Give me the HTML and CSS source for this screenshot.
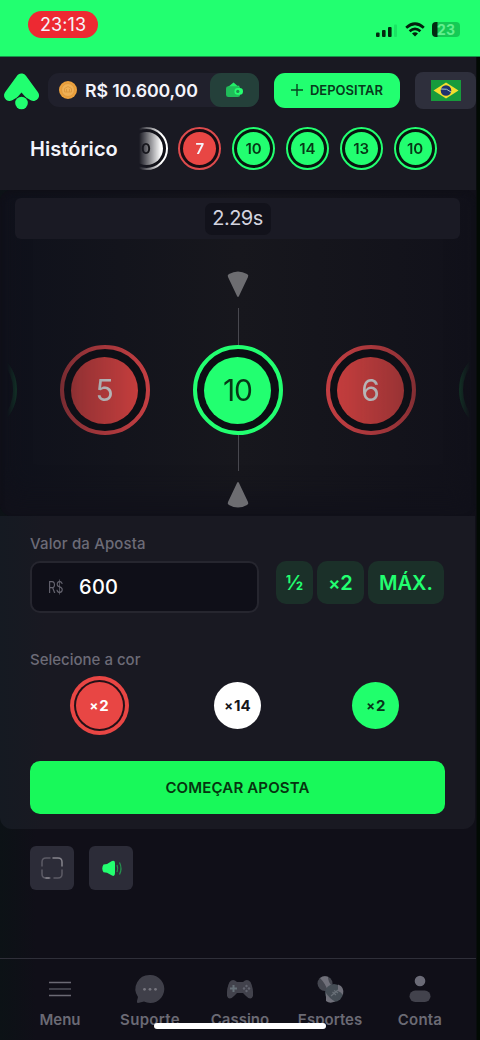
FILE: index.html
```html
<!DOCTYPE html>
<html lang="pt-BR">
<head>
<meta charset="utf-8">
<meta name="viewport" content="width=device-width, initial-scale=1">
<title>Double</title>
<link rel="stylesheet" href="styles.css">
</head>
<body>
<div class="app">
  <div class="status">
    <span class="clock">23:13</span>
    <div class="indicators">
      <svg width="22" height="14" viewBox="0 0 22 14"><g fill="#03280f"><rect x="0" y="9.500" width="3.600" height="4.500" rx="1"/><rect x="6" y="7" width="3.600" height="7" rx="1"/><rect x="12" y="4" width="3.600" height="10" rx="1"/></g><rect x="18" y="1.500" width="3" height="12.500" rx="1" fill="#1be464"/></svg>
      <svg width="20" height="15" viewBox="0 0 20 15"><g fill="none" stroke="#03200d" stroke-width="2.700"><path d="M1.200 5.700Q10-2.200 18.800 5.700"/><path d="M4.600 9.200Q10 4.400 15.400 9.200"/></g><path d="M7 11.500Q10 9 13 11.500L10 14.500Z" fill="#03200d"/></svg>
      <div class="battery">23</div>
    </div>
  </div>

  <header class="header">
    <svg class="logo" width="36" height="37" viewBox="0 0 36 37"><path d="M17.500 6L5.500 22.500L17.500 15.500L29.500 22.500Z" fill="#21ff70" stroke="#21ff70" stroke-width="11" stroke-linejoin="round"/><path d="M17.500 19.500L10 28V34H25V28Z" fill="#191923"/><circle cx="17.500" cy="30" r="6.300" fill="#21ff70"/></svg>
    <div class="balance">
      <svg class="coin" width="18" height="18" viewBox="0 0 18 18"><circle cx="9" cy="9" r="9" fill="#eda13d"/><circle cx="9" cy="9" r="6.500" fill="#f0b055" stroke="#e19a3c"/><path d="M5.500 7.500L9 5.500L12.500 7.500V11H5.500ZM7.500 8V11M10.500 8V11" fill="none" stroke="#df9a40"/></svg>
      <span class="amount">R$ 10.600,00</span>
      <div class="wallet"><svg width="17" height="16" viewBox="0 0 18 17"><path d="M1 6L8 0.500L12 4H14V7H1Z" fill="#23ee68"/><rect y="4.500" width="15" height="11.500" rx="2.500" fill="#20bd5a"/><rect x="9" y="6.500" width="9" height="7" rx="3.500" fill="#25ff70"/><circle cx="12.500" cy="10" r="1.700" fill="#248c50"/></svg></div>
    </div>
    <button class="deposit"><svg width="12" height="12" viewBox="0 0 12 12"><path d="M6 0V12M0 6H12" stroke="#07451f" stroke-width="1.400"/></svg><span>DEPOSITAR</span></button>
    <div class="lang"><svg width="30" height="21" viewBox="0 0 30 21"><rect width="30" height="21" fill="#179b3c"/><path d="M15 2.500L27.500 10.500L15 18.500L2.500 10.500Z" fill="#f3de2f"/><circle cx="15" cy="10.500" r="5.300" fill="#20336f"/><path d="M10 9Q16 8 20 12" fill="none" stroke="#a9c7c6"/></svg></div>
  </header>

  <section class="history">
    <h2 class="history-title">Histórico</h2>
    <div class="history-list">
      <div class="chip white"><span>0</span></div>
      <div class="chip red"><span>7</span></div>
      <div class="chip green"><span>10</span></div>
      <div class="chip green"><span>14</span></div>
      <div class="chip green"><span>13</span></div>
      <div class="chip green"><span>10</span></div>
    </div>
  </section>

  <section class="game">
    <div class="timer"><span>2.29s</span></div>
    <div class="stage">
      <div class="pointer">
        <svg width="22" height="27" viewBox="0 0 22 27"><path d="M1 6Q0 4 2 3Q11-2 20 3Q22 4 21 6L12 25Q11 27 10 25Z" fill="#6d6d71"/></svg>
        <i class="line"></i>
      </div>
      <div class="reel">
        <div class="ball green faded"></div>
        <div class="ball red"><span>5</span></div>
        <div class="ball green"><span>10</span></div>
        <div class="ball red"><span>6</span></div>
        <div class="ball green faded"></div>
      </div>
      <div class="pointer up">
        <svg width="22" height="27" viewBox="0 0 22 27"><path d="M1 6Q0 4 2 3Q11-2 20 3Q22 4 21 6L12 25Q11 27 10 25Z" fill="#6d6d71"/></svg>
        <i class="line"></i>
      </div>
    </div>
  </section>

  <section class="bet">
    <div class="label amount-label">Valor da Aposta</div>
    <div class="bet-row">
      <div class="input"><span class="currency">R$</span><span class="value">600</span></div>
      <div class="quick">
        <button class="q half">½</button>
        <button class="q double"><small>×</small>2</button>
        <button class="q max">MÁX.</button>
      </div>
    </div>
    <div class="label pick">Selecione a cor</div>
    <div class="colors">
      <div class="slot"><button class="color red selected"><small>×</small>2</button></div>
      <div class="slot"><button class="color white"><small>×</small>14</button></div>
      <div class="slot"><button class="color green"><small>×</small>2</button></div>
    </div>
    <button class="start"><span>COMEÇAR APOSTA</span></button>
  </section>

  <div class="tools">
    <div class="tool"><svg width="22" height="22" viewBox="0 0 22 22"><g fill="none" stroke-width="1.500" stroke-linecap="round"><path d="M1 9V5Q1 1 5 1H9M1 13V17Q1 21 5 21H9M13 21H17Q21 21 21 17V13" stroke="#5c5b65"/><path d="M12 1H17Q21 1 21 5V9M5 21H8" stroke="#85848c"/></g></svg></div>
    <div class="tool"><svg width="21" height="17" viewBox="0 0 21 17"><path d="M2.500 4.500L6 4L11 1Q14 0 14 3V13Q14 17 11 15.500L6 12.800L2.500 12.300Q0 8.500 2.500 4.500Z" fill="#23ff70"/><path d="M16 5Q17.500 8.500 16 12M18.500 2.500Q21.500 8.500 18.500 14.500" fill="none" stroke="#25934f" stroke-width="1.200"/></svg></div>
  </div>

  <nav class="nav">
    <div class="tab"><svg width="30" height="30" viewBox="0 0 30 30"><path d="M4 8.500H26M4 21.500H26" stroke="#6b6a74" stroke-width="1.700"/><path d="M4 15H26" stroke="#494953" stroke-width="1.700"/></svg><span class="menu-name">Menu</span></div>
    <div class="tab"><svg width="30" height="30" viewBox="0 0 30 30"><path d="M15 1A14 14 0 1 1 9 27.500L3 29Q1.500 29 2 27L3 23A14 14 0 0 1 15 1Z" fill="#3f3f49"/><g fill="#77767f"><circle cx="9.500" cy="15.300" r="1.400"/><circle cx="15" cy="15.300" r="1.400"/><circle cx="20.500" cy="15.300" r="1.400"/></g></svg><span class="support-name">Suporte</span></div>
    <div class="tab"><svg width="30" height="30" viewBox="0 0 30 30"><path d="M4.500 8Q8 4 12 8H18Q22 4 25.500 8Q28.500 14 28 22Q26 27 21 22L18 19H12L9 22Q4 27 2 22Q1.500 14 4.500 8Z" fill="#42424c"/><path d="M8.500 11V18M5 14.500H12" stroke="#667078" stroke-width="2"/><g fill="#62646f"><circle cx="21.500" cy="12" r="1.200"/><circle cx="19" cy="14.500" r="1.200"/><circle cx="24" cy="14.500" r="1.200"/><circle cx="21.500" cy="17" r="1.200"/></g></svg><span class="casino-name">Cassino</span></div>
    <div class="tab"><svg width="30" height="30" viewBox="0 0 30 30"><circle cx="10" cy="9.500" r="7.500" fill="#454750"/><path d="M5 4Q9 1 13 3Q13 8 17 12L13 17Q10 9 5 4Z" fill="#70707a"/><circle cx="19" cy="19" r="9" fill="#454d55"/><path d="M23 10.500Q30 13 28 21Q26 18 23 17ZM11 19Q14 24 20 27.500Q15 30 11 27Z" fill="#70707a"/><path d="M16 22L23 16M17.500 18L21 21M19 16.500L23 19" stroke="#697078" stroke-width="1.200"/></svg><span class="sports-name">Esportes</span></div>
    <div class="tab"><svg width="30" height="30" viewBox="0 0 30 30"><circle cx="15" cy="7" r="5.300" fill="#6b6b77"/><rect x="4.500" y="16.500" width="21" height="11.500" rx="5.700" fill="#42424c"/></svg><span class="account-name">Conta</span></div>
    <div class="home-bar"></div>
  </nav>
</div>
</body>
</html>
```
FILE: styles.css
```css
* { box-sizing: border-box; }
body {
  margin: 0;
  background: #020a04;
  font-family: Inter, "Liberation Sans", sans-serif;
  color: #f4f4fb;
}
button { border: 0; padding: 0; font-family: inherit; }
svg { display: block; flex: none; overflow: visible; }
.app {
  width: 480px;
  height: 1040px;
  overflow: hidden;
  display: flex;
  flex-direction: column;
  background: linear-gradient(90deg, #0c1216 0, #100f18 36px, #100f18 476px, #020a04 477px);
}

.status {
  height: 57px;
  flex: none;
  display: flex;
  justify-content: space-between;
  align-items: flex-start;
  padding: 11px 20px 0 28px;
  background: #22ff70;
  border-bottom: 1px solid #17914a;
}
.clock {
  width: 70px;
  height: 27px;
  border-radius: 14px;
  background: #ed2932;
  font-size: 18px;
  line-height: 28px;
  text-align: center;
  letter-spacing: .1px;
}
.indicators { display: flex; align-items: center; gap: 7px; padding-top: 11px; }
.battery {
  width: 28px;
  height: 15px;
  border-radius: 4px;
  background: linear-gradient(90deg, #032b11 5px, #14ca55 6px);
  color: #62f08e;
  font-size: 14px;
  font-weight: 700;
  line-height: 15px;
  text-align: center;
}

.header {
  width: 476px;
  height: 64px;
  flex: none;
  display: flex;
  align-items: center;
  padding: 2px 0 0 4px;
  background: #191922;
}
.logo { margin-top: 2px; }
.balance {
  width: 211px;
  height: 34px;
  margin-left: 8px;
  display: flex;
  align-items: center;
  border-radius: 11px;
  background: #20202c;
}
.coin { margin: 0 8px 0 11px; }
.amount { flex: 1; font-size: 17.800px; font-weight: 600; letter-spacing: -.15px; white-space: nowrap; }
.wallet {
  width: 49px;
  height: 34px;
  display: flex;
  align-items: center;
  justify-content: center;
  border-radius: 11px;
  background: #24403a;
}
.deposit {
  width: 126px;
  height: 35px;
  margin-left: 15px;
  display: flex;
  align-items: center;
  justify-content: center;
  gap: 7px;
  border-radius: 11px;
  background: #22ff70;
  color: #07391c;
  font-size: 13px;
  font-weight: 600;
}
.lang {
  width: 61px;
  height: 37px;
  margin-left: 15px;
  display: flex;
  align-items: center;
  justify-content: center;
  border-radius: 8px;
  background: #2e2f3c;
}

.history {
  width: 476px;
  height: 69px;
  flex: none;
  display: flex;
  align-items: center;
  padding: 0 0 14px 30px;
  background: #191922;
}
.history-title { width: 109px; margin: 0; font-size: 20px; font-weight: 600; letter-spacing: .05px; }
.history-list {
  width: 310px;
  display: flex;
  justify-content: flex-end;
  gap: 10.800px;
  overflow: hidden;
  padding-right: 12.500px;
  -webkit-mask-image: linear-gradient(90deg, transparent, #000 22px);
  mask-image: linear-gradient(90deg, transparent, #000 22px);
}
.chip {
  width: 43px;
  height: 43px;
  flex: none;
  padding: 3px;
  border: 2.500px solid;
  border-radius: 50%;
  background: #09140f;
  font-size: 15px;
  font-weight: 600;
}
.chip span, .ball span {
  display: flex;
  width: 100%;
  height: 100%;
  align-items: center;
  justify-content: center;
  border-radius: 50%;
}
.chip.green { border-color: #22ff70; }
.chip.green span { background: #22ff70; color: #073817; }
.chip.red { border-color: #dd4b4d; background: #160d13; }
.chip.red span { background: #e84644; }
.chip.white { border-color: #fff; background: #101017; }
.chip.white span { background: #fff; color: #111; }

.game {
  width: 476px;
  height: 326px;
  flex: none;
  padding-top: 8px;
  border-radius: 12px;
  background: linear-gradient(90deg, #0f111b, #17171d 50%, #11111a);
  box-shadow: inset 0 3px 4px #0f0f17, inset 0 -18px 28px #11111a;
}
.timer {
  width: 445px;
  height: 41px;
  margin-left: 15px;
  display: flex;
  align-items: center;
  justify-content: center;
  border-radius: 6px;
  background: #1a1a24;
}
.timer span {
  width: 66px;
  height: 32px;
  border-radius: 7px;
  background: #12121b;
  color: #d3d3df;
  font-size: 20px;
  line-height: 31px;
  text-align: center;
  letter-spacing: -.5px;
}
.stage { height: 277px; padding-top: 32px; display: flex; flex-direction: column; align-items: center; }
.pointer { height: 74px; display: flex; flex-direction: column; align-items: center; gap: 10px; }
.pointer.up { flex-direction: column-reverse; height: 73px; }
.pointer.up svg { transform: rotate(180deg); }
.line { width: 1px; flex: 1; background: #48484f; }
.reel {
  width: 475px;
  height: 90px;
  margin-left: -1px;
  display: flex;
  justify-content: center;
  gap: 43px;
  overflow: hidden;
  -webkit-mask-image: linear-gradient(90deg, transparent 7px, #0003 16px, #000000a0 80px, #000000dd 148px, #000 180px, #000 290px, #000000dd 325px, #000000a0 405px, #0003 460px, transparent 470px);
  mask-image: linear-gradient(90deg, transparent 7px, #0003 16px, #000000a0 80px, #000000dd 148px, #000 180px, #000 290px, #000000dd 325px, #000000a0 405px, #0003 460px, transparent 470px);
}
.ball {
  width: 90px;
  height: 90px;
  flex: none;
  padding: 7.500px;
  border: 4px solid;
  border-radius: 50%;
  background: #0d0e14;
  font-size: 30px;
}
.ball.green { border-color: #22ff70; }
.ball.green span { background: #22ff70; color: #073817; letter-spacing: -1px; }
.ball.red { border-color: #df4548; }
.ball.red span { background: #e84644; color: #eee; }
.ball.faded { opacity: .6; }

.bet {
  width: 475px;
  height: 313px;
  flex: none;
  padding: 18px 30px 0;
  border-radius: 0 0 12px 12px;
  background: linear-gradient(90deg, #151a22, #191922 45px);
}
.label { height: 20px; color: #6c6b77; font-size: 15px; font-weight: 500; line-height: 20px; }
.amount-label { letter-spacing: .15px; }
.bet-row { display: flex; gap: 17px; padding-top: 7px; }
.input {
  width: 229px;
  height: 52px;
  display: flex;
  align-items: center;
  padding-left: 16px;
  border: 2px solid #26262f;
  border-radius: 10px;
  background: #0f0f18;
}
.currency {
  width: 31px;
  color: #65646f;
  font-size: 16px;
  transform: scaleX(.75);
  transform-origin: left;
}
.value { font-size: 20px; font-weight: 500; color: #fff; letter-spacing: .3px; }
.quick { display: flex; gap: 4px; }
.q {
  height: 43px;
  border-radius: 10px;
  background: #1b3029;
  color: #22ff70;
  font-size: 20px;
  font-weight: 600;
}
.q small { font-size: 18px; }
.half { width: 37px; }
.double { width: 47px; }
.max { width: 76px; }
.pick { margin-top: 37px; }
.colors { display: flex; height: 70px; }
.slot { flex: 1; display: flex; align-items: center; justify-content: center; }
.color { width: 47px; height: 47px; border-radius: 50%; font-size: 15px; font-weight: 700; }
.color small { font-size: 13px; margin-right: 1px; }
.color.red { background: #e84644; color: #fff; }
.color.white { background: #fff; color: #16161b; }
.color.green { background: #20ff6c; color: #07351a; }
.selected { box-shadow: 0 0 0 2px #231117, 0 0 0 6px #e84644; }
.start {
  display: block;
  width: 415px;
  height: 53px;
  margin-top: 21px;
  border-radius: 10px;
  background: #18f95a;
  color: #06340f;
  font-size: 15px;
  font-weight: 600;
  letter-spacing: .15px;
}
.tools { display: flex; gap: 15px; padding: 17px 30px 0; height: 129px; flex: none; }
.tool {
  width: 44px;
  height: 44px;
  display: flex;
  align-items: center;
  justify-content: center;
  border-radius: 6px;
  background: #2c2c38;
}
.nav {
  position: relative;
  width: 476px;
  height: 82px;
  flex: none;
  display: flex;
  padding: 15px 11px 0 15px;
  border-top: 1px solid #2f2f39;
}
.tab {
  flex: 1;
  display: flex;
  flex-direction: column;
  align-items: center;
  gap: 5px;
  color: #6b6a74;
  font-size: 15px;
  font-weight: 600;
  line-height: 22px;
}
.support-name { letter-spacing: .3px; }
.account-name { letter-spacing: .2px; }
.home-bar {
  position: absolute;
  left: 154px;
  top: 64px;
  width: 172px;
  height: 6px;
  border-radius: 3px;
  background: #fff;
}
```
